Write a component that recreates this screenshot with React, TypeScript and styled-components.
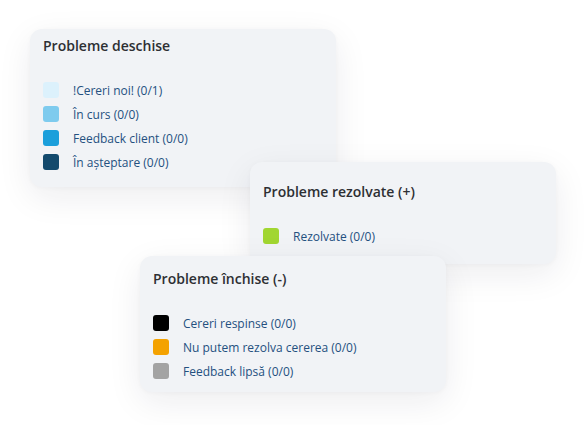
import styled, { createGlobalStyle } from "styled-components";

const GlobalStyle = createGlobalStyle`
	html, body {
		margin: 0;
		padding: 0;
		background: #ffffff;
	}
	body {
		font-family: "Open Sans", "Noto Sans", sans-serif;
	}
`;

const Canvas = styled.div`
	position: relative;
	width: 586px;
	height: 425px;
	overflow: hidden;
	background: #ffffff;
`;

interface CardProps {
	$x: number;
	$y: number;
	$pt: number;
	$pb: number;
}

const Card = styled.section<CardProps>`
	position: absolute;
	left: ${(p) => p.$x}px;
	top: ${(p) => p.$y}px;
	width: 306px;
	box-sizing: border-box;
	padding: ${(p) => p.$pt}px 13px ${(p) => p.$pb}px;
	background: #f1f3f6;
	border-radius: 12px;
	box-shadow: 0 10px 34px rgba(20, 30, 50, 0.08), 0 1px 4px rgba(20, 30, 50, 0.03);
`;

const Title = styled.h3`
	margin: 0;
	font-size: 14px;
	line-height: 20px;
	font-weight: 600;
	color: #2d2f33;
`;

const List = styled.ul`
	list-style: none;
	margin: 22px 0 0;
	padding: 0;
	display: flex;
	flex-direction: column;
`;

const Row = styled.li`
	display: flex;
	align-items: center;
	gap: 14px;
	height: 24px;
	font-size: 12px;
	color: #24507f;
`;

const Swatch = styled.span<{ $color: string }>`
	width: 16px;
	height: 16px;
	border-radius: 3px;
	flex: none;
	background: ${(p) => p.$color};
`;

interface Group {
	title: string;
	x: number;
	y: number;
	pt: number;
	pb: number;
	items: { label: string; color: string }[];
}

const groups: Group[] = [
	{
		title: "Probleme deschise",
		x: 30,
		y: 29,
		pt: 7,
		pb: 13,
		items: [
			{ label: "!Cereri noi! (0/1)", color: "#dcf1fc" },
			{ label: "În curs (0/0)", color: "#7ecbee" },
			{ label: "Feedback client (0/0)", color: "#1b9fdb" },
			{ label: "În așteptare (0/0)", color: "#134a6d" },
		],
	},
	{
		title: "Probleme rezolvate (+)",
		x: 250,
		y: 162,
		pt: 20,
		pb: 16,
		items: [{ label: "Rezolvate (0/0)", color: "#a1d631" }],
	},
	{
		title: "Probleme închise (-)",
		x: 140,
		y: 256,
		pt: 13,
		pb: 9,
		items: [
			{ label: "Cereri respinse (0/0)", color: "#000000" },
			{ label: "Nu putem rezolva cererea (0/0)", color: "#f4a200" },
			{ label: "Feedback lipsă (0/0)", color: "#a3a3a3" },
		],
	},
];

function App(): JSX.Element {
	return (
		<>
			<GlobalStyle />
			<Canvas>
				{groups.map((g) => (
					<Card key={g.title} $x={g.x} $y={g.y} $pt={g.pt} $pb={g.pb}>
						<Title>{g.title}</Title>
						<List>
							{g.items.map((item) => (
								<Row key={item.label}>
									<Swatch $color={item.color} />
									{item.label}
								</Row>
							))}
						</List>
					</Card>
				))}
			</Canvas>
		</>
	);
}

export default App;
